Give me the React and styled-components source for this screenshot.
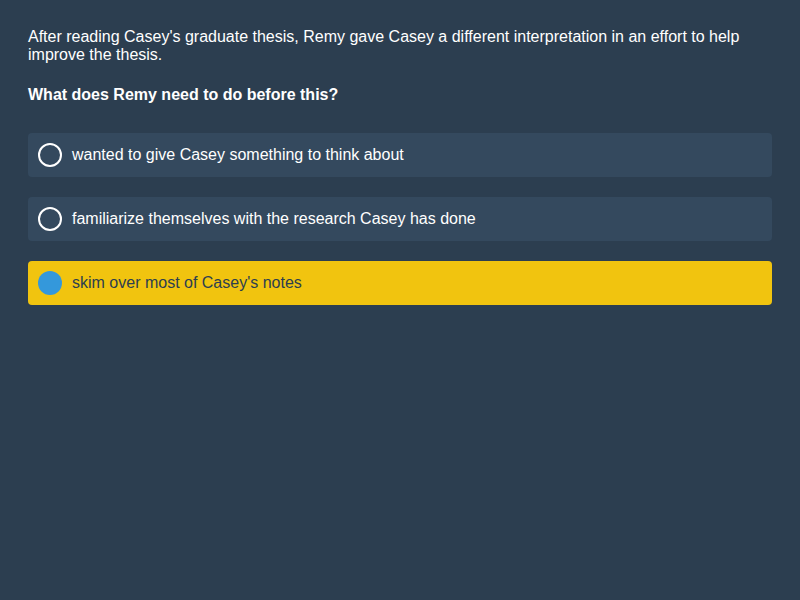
import React, { useState } from "react";
import styled, { createGlobalStyle } from "styled-components";

const Global = createGlobalStyle`
  html, body { margin: 0; padding: 0; background: #2c3e50; }
  body { font-family: "Liberation Sans", Arial, sans-serif; }
`;

const Page = styled.div`
  min-height: 600px;
  box-sizing: border-box;
  padding: 28px 28px;
  background: #2c3e50;
  color: #ffffff;
`;

const Passage = styled.p`
  margin: 0 0 22px;
  font-size: 16px;
  line-height: 18px;
`;

const Question = styled.p`
  margin: 0 0 29px;
  font-size: 16px;
  line-height: 18px;
  font-weight: bold;
`;

const Options = styled.div`
  display: flex;
  flex-direction: column;
  gap: 20px;
`;

const Option = styled.div`
  display: flex;
  align-items: center;
  gap: 10px;
  height: 44px;
  box-sizing: border-box;
  padding: 0 10px;
  border-radius: 4px;
  background: ${(p) => (p.$selected ? "#f1c40f" : "#34495e")};
  color: ${(p) => (p.$selected ? "#2c3e50" : "#ffffff")};
  font-size: 16px;
  cursor: pointer;
`;

const Radio = styled.span`
  width: 24px;
  height: 24px;
  box-sizing: border-box;
  border-radius: 50%;
  flex: none;
  border: ${(p) => (p.$selected ? "none" : "2px solid #ffffff")};
  background: ${(p) => (p.$selected ? "#3498db" : "transparent")};
`;

const choices = [
  "wanted to give Casey something to think about",
  "familiarize themselves with the research Casey has done",
  "skim over most of Casey's notes",
];

export default function App() {
  const [sel, setSel] = useState(2);
  return (
    <>
      <Global />
      <Page>
        <Passage>
          After reading Casey's graduate thesis, Remy gave Casey a different interpretation in an effort to help
          improve the thesis.
        </Passage>
        <Question>What does Remy need to do before this?</Question>
        <Options>
          {choices.map((c, i) => (
            <Option key={i} $selected={sel === i} onClick={() => setSel(i)}>
              <Radio $selected={sel === i} />
              {c}
            </Option>
          ))}
        </Options>
      </Page>
    </>
  );
}
